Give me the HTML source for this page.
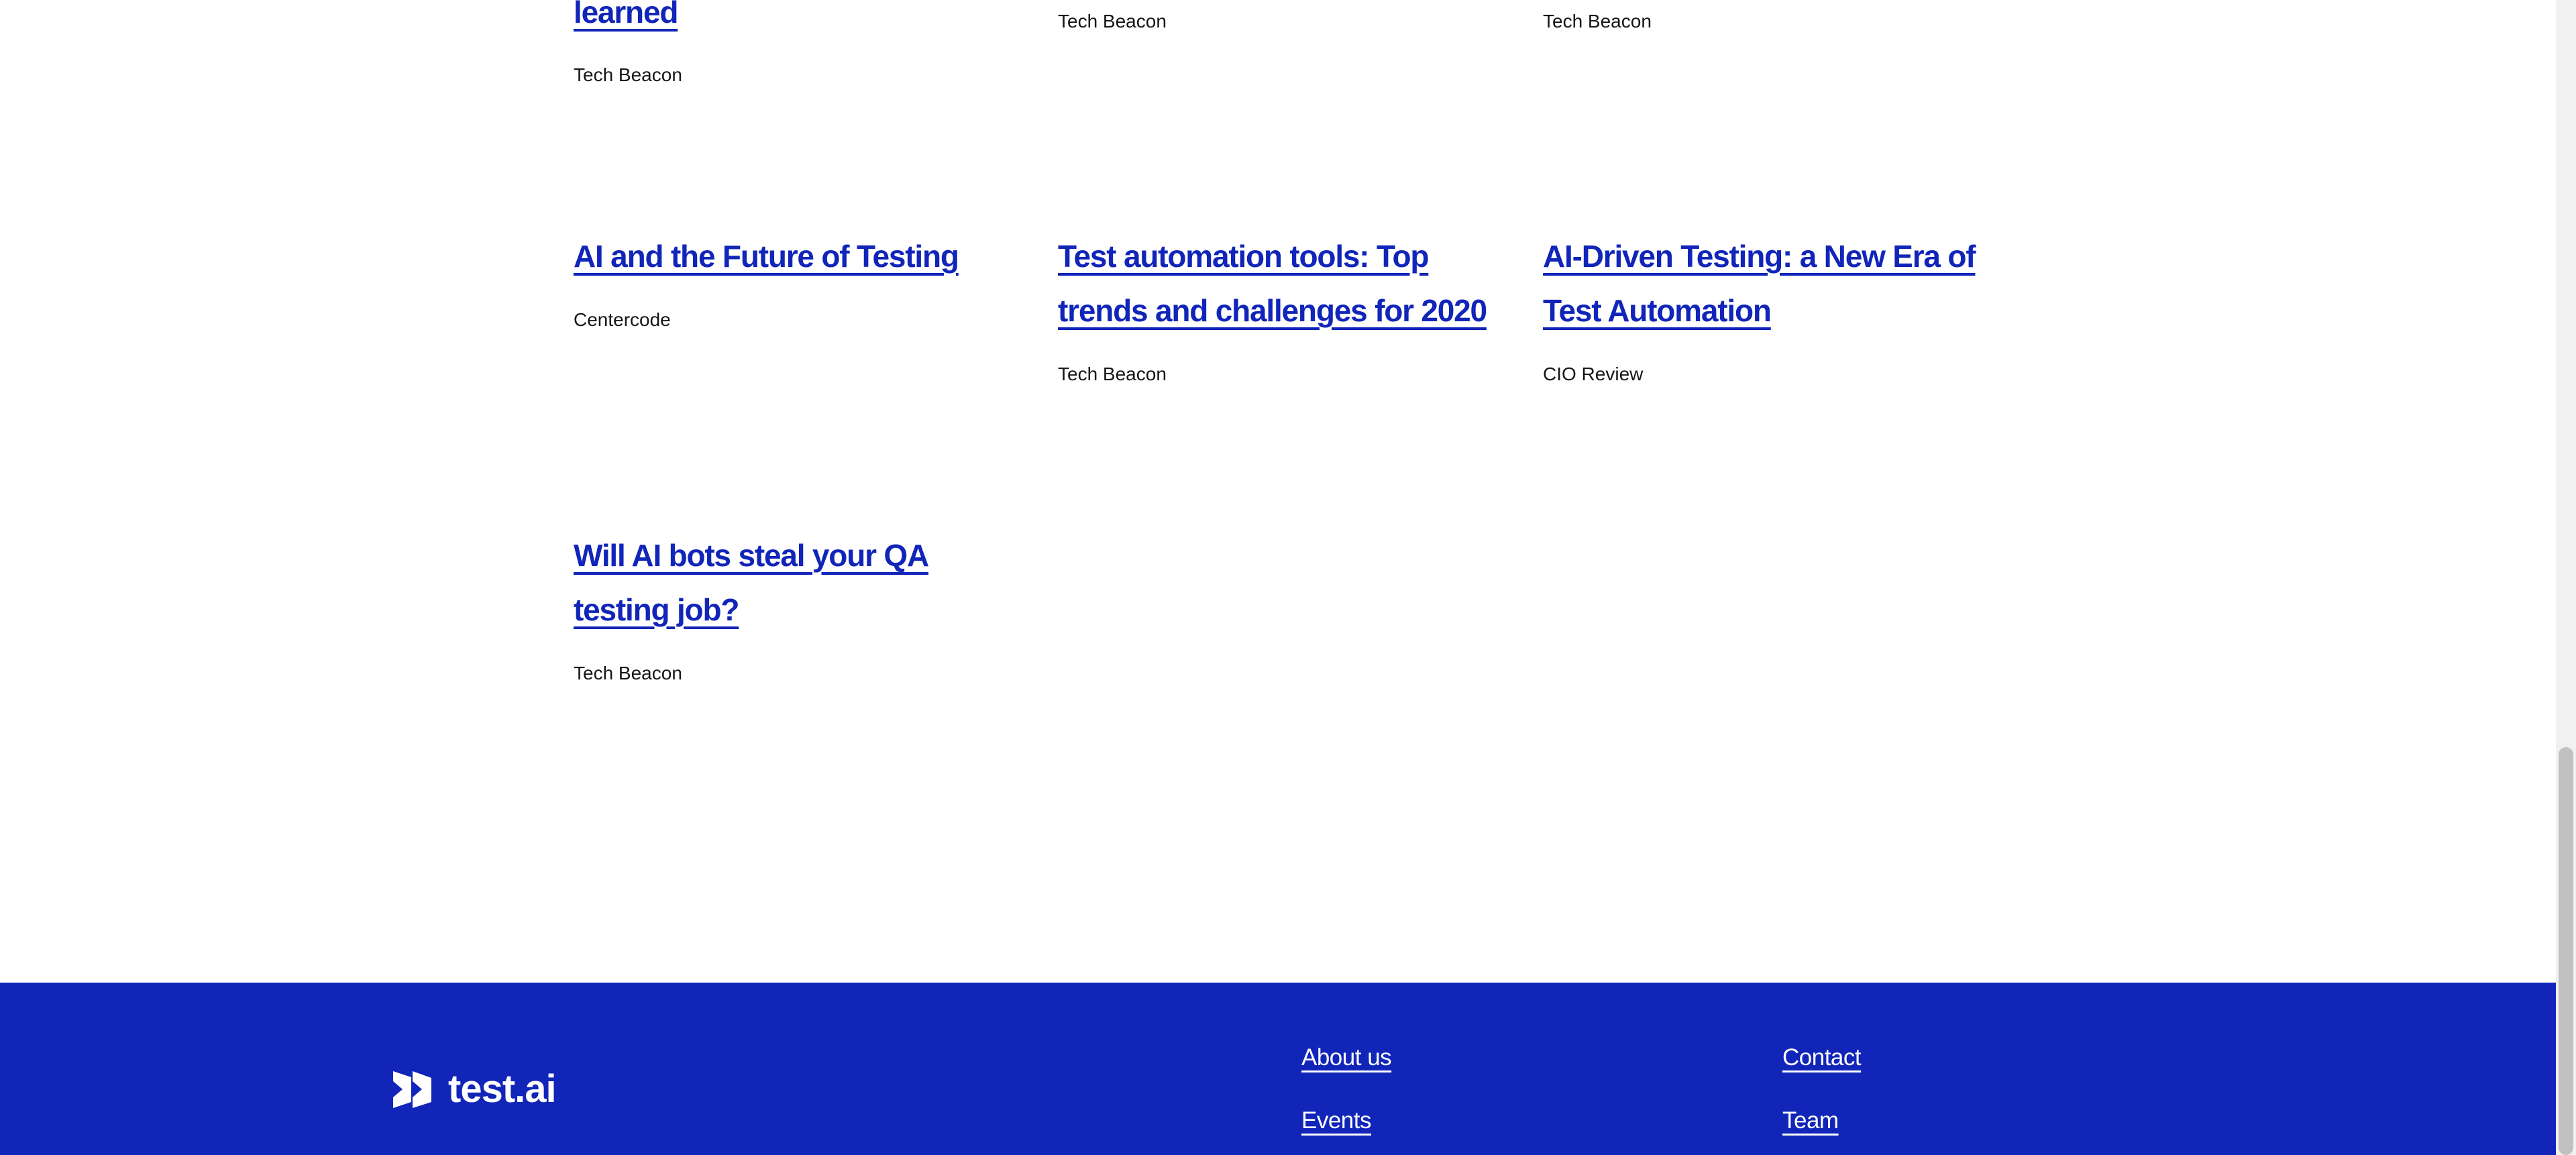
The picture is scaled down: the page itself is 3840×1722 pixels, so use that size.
<!DOCTYPE html>
<html><head><meta charset="utf-8"><style>
html,body{margin:0;padding:0;}
body{width:3840px;height:1722px;position:relative;overflow:hidden;background:#fff;font-family:"Liberation Sans",sans-serif;}
.h{position:absolute;font-weight:bold;font-size:46px;line-height:81px;letter-spacing:-1.2px;color:#1125b9;text-decoration:underline;text-decoration-thickness:4px;text-underline-offset:9px;white-space:nowrap;margin:0;}
.s{position:absolute;font-size:28px;line-height:40px;color:#161616;white-space:nowrap;}
footer{position:absolute;left:0;top:1465px;width:3810px;height:257px;background:#1125b9;}
.f{position:absolute;font-size:35px;line-height:44px;color:#fff;text-decoration:underline;text-decoration-thickness:3px;text-underline-offset:8px;white-space:nowrap;letter-spacing:-0.5px;}
.sb{position:absolute;left:3810px;top:0;width:30px;height:1722px;background:#f1f1f1;}
.th{position:absolute;left:3814px;top:1114px;width:22px;height:608px;background:#c1c1c1;border-radius:11px;}
</style></head><body>
<div class="h" style="left:855px;top:-22px;">learned</div>
<div class="s" style="left:855px;top:92px;">Tech Beacon</div>
<div class="s" style="left:1577px;top:12px;">Tech Beacon</div>
<div class="s" style="left:2300px;top:12px;">Tech Beacon</div>

<div class="h" style="left:855px;top:342px;">AI and the Future of Testing</div>
<div class="s" style="left:855px;top:457px;">Centercode</div>
<div class="h" style="left:1577px;top:342px;">Test automation tools: Top<br>trends and challenges for 2020</div>
<div class="s" style="left:1577px;top:538px;">Tech Beacon</div>
<div class="h" style="left:2300px;top:342px;">AI-Driven Testing: a New Era of<br>Test Automation</div>
<div class="s" style="left:2300px;top:538px;">CIO Review</div>

<div class="h" style="left:855px;top:788px;">Will AI bots steal your QA<br>testing job?</div>
<div class="s" style="left:855px;top:984px;">Tech Beacon</div>

<footer></footer>
<svg style="position:absolute;left:0;top:0" width="3810" height="1722">
<polygon fill="#fff" points="586,1597 613,1606 613,1643 586,1652 586,1636 600,1624 586,1612"/>
<polygon fill="#fff" points="615,1597 643,1607 643,1643 615,1652 615,1636 629,1624 615,1612"/>
</svg>
<div style="position:absolute;left:668px;top:1591px;font-size:58px;line-height:66px;color:#fff;font-weight:bold;letter-spacing:-1px;">test.ai</div>
<div class="f" style="left:1940px;top:1555px;">About us</div>
<div class="f" style="left:1940px;top:1649px;">Events</div>
<div class="f" style="left:2657px;top:1555px;">Contact</div>
<div class="f" style="left:2657px;top:1649px;">Team</div>
<div class="sb"></div><div class="th"></div>
</body></html>
